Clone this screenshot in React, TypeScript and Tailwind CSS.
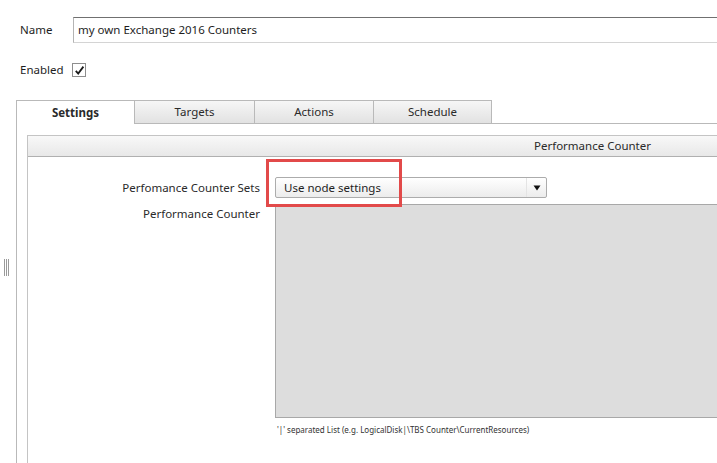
import React from "react";

export default function App() {
  const tabs = [
    { label: "Targets", w: 120 },
    { label: "Actions", w: 119 },
    { label: "Schedule", w: 118 },
  ];
  return (
    <div
      className="relative w-[717px] h-[463px] overflow-hidden bg-white text-[11.5px] text-[#1e1e1e]"
      style={{ fontFamily: '"Noto Sans", "Open Sans", sans-serif' }}
    >
      {/* Name row */}
      <div className="flex items-center mt-[17px] h-[26px]">
        <div className="w-[73px] shrink-0 pl-[20px] leading-none">Name</div>
        <div className="h-[26px] w-[700px] shrink-0 border border-[#b4b4b4] border-t-[#707070] border-b-[#d4d4d4] flex items-center pl-[4px] leading-none">
          my own Exchange 2016 Counters
        </div>
      </div>

      {/* Enabled row */}
      <div className="flex items-center mt-[20px] h-[14px]">
        <div className="w-[72px] shrink-0 pl-[20px] leading-none">Enabled</div>
        <div className="w-[14px] h-[14px] shrink-0 border border-[#8e8e8e] bg-white flex items-center justify-center">
          <svg width="11" height="11" viewBox="0 0 11 11">
            <path d="M1.8 5.8 L4.2 8.6 L9.4 1.6" fill="none" stroke="#1a1a1a" strokeWidth="1.8" />
          </svg>
        </div>
      </div>

      {/* Main area */}
      <div className="flex mt-[23px] h-[363px]">
        {/* splitter */}
        <div className="w-[16px] shrink-0 flex pt-[159px] pl-[4px]">
          <div className="flex gap-[1px] h-[17px]">
            <div className="w-[1px] h-full bg-[#9a9a9a]" />
            <div className="w-[1px] h-full bg-[#9a9a9a]" />
            <div className="w-[1px] h-full bg-[#9a9a9a]" />
          </div>
        </div>

        {/* Tab control */}
        <div className="flex flex-col flex-1 min-w-0">
          <div className="flex h-[24px] shrink-0">
            <div className="w-[119px] shrink-0 h-[24px] bg-white border border-b-0 border-[#b9b9b9] flex items-center justify-center font-bold text-[#2a2a2a]">
              Settings
            </div>
            <div className="flex flex-1 items-end border-b border-[#b9b9b9]">
              {tabs.map((t) => (
                <div
                  key={t.label}
                  className="h-[23px] shrink-0 border-t border-r border-[#b9b9b9] bg-gradient-to-b from-[#f6f6f6] to-[#e2e2e2] flex items-center justify-center text-[#2a2a2a]"
                  style={{ width: t.w }}
                >
                  {t.label}
                </div>
              ))}
            </div>
          </div>

          <div className="flex-1 border-l border-[#b9b9b9] pl-[10px] pt-[11px]">
            <div className="w-[1130px] h-full border-l border-t border-[#c4c4c4] flex flex-col">
              <div className="h-[21px] shrink-0 bg-gradient-to-b from-[#f8f8f8] to-[#e8e8e8] border-b border-[#b0b0b0] flex items-center justify-center text-[#2a2a2a]">
                Performance Counter
              </div>

              <div className="flex flex-col pt-[20px]">
                <div className="flex items-center h-[21px]">
                  <div className="w-[232px] shrink-0 text-right text-[#2a2a2a]">Perfomance Counter Sets</div>
                  <div className="ml-[15px] w-[272px] shrink-0 h-[21px] rounded-[2px] border border-[#acacac] bg-gradient-to-b from-[#ffffff] to-[#ececec] flex items-center">
                    <span className="flex-1 pl-[8px] leading-none">Use node settings</span>
                    <span className="w-[20px] h-full border-l border-[#e4e4e4] flex items-center justify-center">
                      <svg width="8" height="6" viewBox="0 0 8 6">
                        <path d="M0.5 0.5 L7.5 0.5 L4 5.5 Z" fill="#111" />
                      </svg>
                    </span>
                  </div>
                </div>

                <div className="flex mt-[6px]">
                  <div className="w-[232px] shrink-0 text-right pt-[2px] text-[#2a2a2a] leading-[16px]">Performance Counter</div>
                  <div className="ml-[15px] flex flex-col">
                    <div className="w-[860px] h-[214px] bg-[#dddddd] border border-[#a8a8a8]" />
                    <div className="pl-[2px] pt-[7px] text-[8px] leading-[10px] text-[#333]">
                      '|' separated List (e.g. LogicalDisk|\TBS Counter\CurrentResources)
                    </div>
                  </div>
                </div>
              </div>
            </div>
          </div>
        </div>
      </div>

      {/* Red highlight */}
      <div className="absolute left-[266px] top-[159px] w-[136px] h-[48px] border-[3px] border-[#e24a4a] pointer-events-none" />
    </div>
  );
}
